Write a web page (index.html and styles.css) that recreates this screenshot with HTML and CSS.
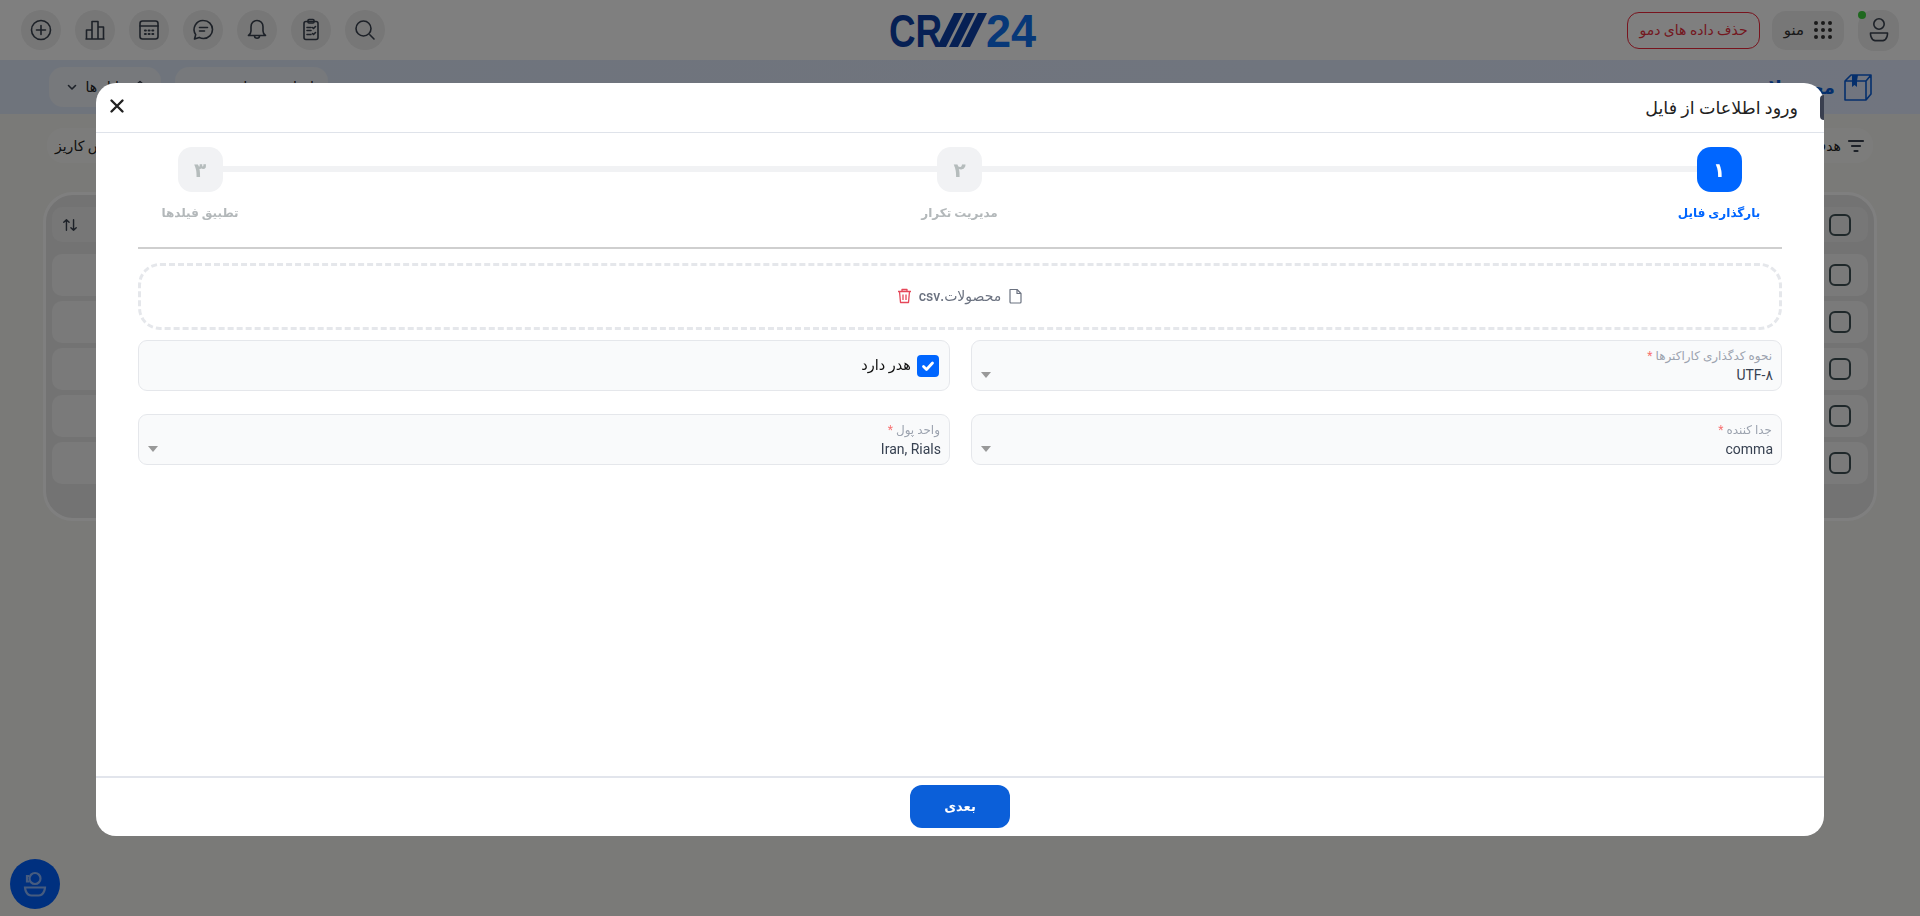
FILE: index.html
```html
<!DOCTYPE html>
<html lang="fa" dir="rtl">
<head>
<meta charset="utf-8">
<title>ورود اطلاعات از فایل</title>
<link rel="stylesheet" href="styles.css">
</head>
<body>
<div class="app">
  <header class="topbar">
    <div class="top-right">
      <div class="avatar">
        <span class="online"></span>
        <svg width="26" height="30" viewBox="0 0 26 30" class="ico"><circle cx="13" cy="9" r="5.2"/><path d="M4.5 18h17c0 0 .3 7-4.5 7.6H9C4.2 25 4.5 18 4.5 18z"/></svg>
      </div>
      <div class="menu">
        <svg width="18" height="18" viewBox="0 0 18 18" class="dots"><circle cx="2" cy="2" r="2"/><circle cx="9" cy="2" r="2"/><circle cx="16" cy="2" r="2"/><circle cx="2" cy="9" r="2"/><circle cx="9" cy="9" r="2"/><circle cx="16" cy="9" r="2"/><circle cx="2" cy="16" r="2"/><circle cx="9" cy="16" r="2"/><circle cx="16" cy="16" r="2"/></svg>
        <span>منو</span>
      </div>
      <div class="demo">حذف داده های دمو</div>
    </div>
    <div class="logo">
      <svg width="160" height="56" viewBox="-6 -11 160 56">
        <text transform="translate(-1 34) scale(.8 1)" class="logo-cr">CR</text>
        <polygon points="64,0 73,0 56,34 47,34" class="logo-m"/>
        <polygon points="76,0 85,0 68,34 59,34" class="logo-m"/>
        <polygon points="88,0 97,0 80,34 71,34" class="logo-m"/>
        <text transform="translate(96 34) scale(.98 1)" class="logo-24">24</text>
      </svg>
    </div>
    <div class="top-left">
      <div class="round"><svg width="24" height="24" viewBox="0 0 24 24" class="ico"><path d="M16.8 16.8L21 21"/><circle cx="10.5" cy="10.5" r="7.5"/></svg></div>
      <div class="round"><svg width="24" height="24" viewBox="0 0 24 24" class="ico"><rect x="5" y="3.5" width="14" height="18" rx="2"/><rect x="9" y="1.5" width="6" height="3.5" rx="1"/><path d="M8 9.5h4M8 12.5h4M8 16.5h4M13.5 9.5l1 1 2-2M13.5 15.5l1 1 2-2"/></svg></div>
      <div class="round"><svg width="24" height="24" viewBox="0 0 24 24" class="ico"><path d="M12 2.5c-3.6 0-6 2.8-6 6.2v4.3c0 2-1 3.4-2.5 4.5h17c-1.5-1.100-2.500-2.500-2.500-4.500V8.700c0-3.400-2.400-6.200-6-6.200z"/><path d="M9.500 18c0 3 5 3 5 0"/></svg></div>
      <div class="round"><svg width="24" height="24" viewBox="0 0 24 24" class="ico"><path d="M12.500 2.500a9 9 0 0 1 0 18c-1.600 0-3-.4-4.300-1.100L3.500 21l1.200-4.400a9 9 0 0 1 7.800-14.100z"/><path d="M8.500 9.500h8M8.500 13h5"/></svg></div>
      <div class="round"><svg width="24" height="24" viewBox="0 0 24 24" class="ico"><rect x="3" y="3" width="18" height="18" rx="2.500"/><path d="M3 8h18"/><path class="thick" d="M8 12.500h.8M11.700 12.500h.8M15.400 12.500h.8M11.700 16h.8M15.400 16h.8M8 16h.8"/></svg></div>
      <div class="round"><svg width="24" height="24" viewBox="0 0 24 24" class="ico"><path d="M3 21h18M3.500 21v-9h5.500v9M9 21V3.500h6V21M15 21V9h5.500v12"/></svg></div>
      <div class="round"><svg width="24" height="24" viewBox="0 0 24 24" class="ico"><circle cx="12" cy="12" r="9.500"/><path d="M12 7.500v9M7.500 12h9"/></svg></div>
    </div>
  </header>

  <section class="subbar">
    <div class="page-title">
      <svg width="30" height="30" viewBox="0 0 30 30" class="box"><path d="M2 9l6-6h20l-5 6zM2 9h21v19H2zM23 9l5-6v19l-5 6"/><path class="mark" d="M9 3h6l-1 6v6l-2.500-2-2.500 2V9z"/></svg>
      <span>محصولات</span>
    </div>
    <div class="sub-actions">
      <div class="pill wide">ایجاد محصول جدید</div>
      <div class="pill narrow">
        <svg width="14" height="14" viewBox="0 0 14 14" class="ico"><path d="M2 6l5-4.500L12 6M3.500 5.500V12h7V5.500"/></svg>
        <span>فایل ها</span>
        <svg width="12" height="12" viewBox="0 0 12 12" class="ico"><path d="M2.500 4.500L6 8l3.500-3.500"/></svg>
      </div>
    </div>
  </section>

  <section class="filters">
    <div class="chip first">
      <svg width="18" height="18" viewBox="0 0 18 18" class="ico"><path class="thick" d="M2 4h14M5 9h8M7.500 14h3"/></svg>
      <span>هدف</span>
    </div>
    <div class="chip last">قیف پیش کاریز</div>
  </section>

  <section class="panel">
    <div class="row head"><span class="check"></span><svg width="16" height="16" viewBox="0 0 18 18" class="ico sort"><path d="M5 15V3M2 6l3-3 3 3M13 3v12M10 12l3 3 3-3"/></svg></div>
    <div class="row"><span class="check"></span></div>
    <div class="row"><span class="check"></span></div>
    <div class="row"><span class="check"></span></div>
    <div class="row"><span class="check"></span></div>
    <div class="row"><span class="check"></span></div>
  </section>

  <div class="bubble">
    <svg width="34" height="34" viewBox="0 0 34 34" class="bubble-ico"><circle cx="17" cy="11.500" r="5.500"/><path d="M11 9h-2v5.500h2.500"/><path d="M7 20.500h20c0 0-.5 8-6.500 8h-7c-6 0-6.500-8-6.500-8z"/></svg>
  </div>
</div>

<div class="overlay">
  <div class="modal">
    <span class="sliver"></span>
    <div class="modal-head">
      <h2>ورود اطلاعات از فایل</h2>
      <svg width="16" height="16" viewBox="0 0 16 16" class="close"><path d="M2.500 2.500l11 11M13.500 2.500l-11 11"/></svg>
    </div>
    <div class="modal-body">
      <div class="steps">
        <div class="step active"><div class="num">۱</div><div class="lbl">بارگذاری فایل</div></div>
        <div class="step"><div class="num">۲</div><div class="lbl">مدیریت تکرار</div></div>
        <div class="step"><div class="num">۳</div><div class="lbl">تطبیق فیلدها</div></div>
      </div>
      <hr class="rule">
      <div class="drop">
        <svg width="15" height="16" viewBox="0 0 15 16" class="file"><path d="M2 1.500h7l4 4V14a1 1 0 0 1-1 1H3a1 1 0 0 1-1-1z"/><path d="M9 1.500v4h4"/></svg>
        <span>محصولات.csv</span>
        <svg width="15" height="16" viewBox="0 0 15 16" class="trash"><path d="M1 3.500h13M5 3.500V1.500h5v2M2.500 3.500l1 11h8l1-11M6 6.500v5.500M9 6.500v5.500"/></svg>
      </div>
      <div class="fields">
        <div class="field">
          <div class="f-text"><div class="f-label">نحوه کدگذاری کاراکترها <i>*</i></div><div class="f-value">UTF-۸</div></div>
          <span class="caret"></span>
        </div>
        <div class="field flag">
          <span class="tick"><svg width="14" height="14" viewBox="0 0 14 14"><path d="M2.500 7.500l3 3 6-6.500"/></svg></span>
          <span>هدر دارد</span>
        </div>
        <div class="field">
          <div class="f-text"><div class="f-label">جدا کننده <i>*</i></div><div class="f-value">comma</div></div>
          <span class="caret"></span>
        </div>
        <div class="field">
          <div class="f-text"><div class="f-label">واحد پول <i>*</i></div><div class="f-value">Iran, Rials</div></div>
          <span class="caret"></span>
        </div>
      </div>
    </div>
    <div class="modal-foot"><div class="next">بعدی</div></div>
  </div>
</div>
</body>
</html>
```
FILE: styles.css
```css
*{box-sizing:border-box}
html,body{height:100%}
body{margin:0;overflow:hidden;background:#f4f4f0;color:#222;font-family:Roboto,"DejaVu Sans",sans-serif;font-size:13px}
.app{height:916px;display:flex;flex-direction:column;position:relative}

.topbar{height:60px;background:#fff;display:grid;grid-template-columns:1fr auto 1fr;align-items:center;padding:0 21px}
.top-right,.top-left{display:flex;align-items:center}
.top-left{justify-content:flex-end;gap:14px}
.top-right{gap:14px}
.avatar{width:41px;height:41px;border-radius:16px;background:#eee;display:flex;align-items:center;justify-content:center;position:relative}
.online{position:absolute;top:1px;left:0;width:8px;height:8px;border-radius:50%;background:#3fd13f}
.menu{width:72px;height:39px;border-radius:14px;background:#eee;display:flex;align-items:center;justify-content:center;gap:10px;color:#333;font-size:15px}
.dots{fill:#333}
.demo{width:133px;height:37px;border:1px solid #f0283c;border-radius:12px;background:#fff;color:#e8303f;display:flex;align-items:center;justify-content:center;font-size:14px;margin-right:-2px}
.round{width:40px;height:40px;border-radius:50%;background:#eee;display:flex;align-items:center;justify-content:center}
.ico{fill:none;stroke:#3a4350;stroke-width:1.6;stroke-linecap:round;stroke-linejoin:round}
.ico .thick{stroke-width:2.200}
.logo{margin-right:-7px;display:flex}
.logo svg{margin:-8px -5px}
.logo-cr{font:700 46px "Liberation Sans",sans-serif;fill:#0c40a8;direction:ltr}
.logo-m{fill:#0c40a8}
.logo-24{font:700 46px "Liberation Sans",sans-serif;fill:#0e70f0;direction:ltr}

.subbar{height:54px;background:linear-gradient(to left,#e2ebff,#dee8f8);display:flex;align-items:center;justify-content:space-between;padding:0 47px 0 49px}
.page-title{display:flex;align-items:center;gap:8px;color:#0b5fd9;font-size:18px;font-weight:700}
.box{fill:none;stroke:#0b5fd9;stroke-width:1.600;stroke-linejoin:round}
.box .mark{fill:#0b5fd9;stroke:none}
.sub-actions{display:flex;gap:14px;align-items:center}
.pill{height:40px;border-radius:14px;background:#eef2f9;display:flex;align-items:center;gap:7px;font-size:14px;padding:0 14px}
.wide{width:153px}
.narrow{width:112px}

.filters{height:35px;margin:14px 47px 0;display:flex;justify-content:space-between}
.chip{height:35px;border-radius:16px;background:#f9f9f6;display:flex;align-items:center;gap:6px;padding:0 8px;font-size:14px}

.panel{height:329px;margin:29px 43px 0;border:3px solid #fff;border-radius:30px;background:#e6e6e6;padding:12px 6px;display:flex;flex-direction:column;gap:5px}
.row{height:42px;flex:none;border-radius:10px;background:#f4f4f4;display:flex;align-items:center;justify-content:space-between;padding:0 17px 0 10px}
.row.head{height:35px;margin-bottom:7px;background:#eee}
.check{width:22px;height:22px;border:2px solid #3f5055;border-radius:6px}
.sort{margin-left:0}

.bubble{position:absolute;left:10px;bottom:7px;width:50px;height:50px;border-radius:50%;background:#0060ff;display:flex;align-items:center;justify-content:center}
.bubble-ico{fill:none;stroke:#fff;stroke-width:2.200;opacity:.55}

.overlay{position:fixed;inset:0;background:rgba(0,0,0,.5);padding:83px 96px 0}
.modal{position:relative;width:1728px;height:753px;background:#fff;border-radius:20px;display:flex;flex-direction:column}
.sliver{position:absolute;right:0;top:12px;width:4px;height:25px;background:#3a3f4f;border-radius:6px 0 0 6px}
.modal-head{height:50px;flex:none;border-bottom:1px solid #dfe3ea;display:flex;align-items:center;justify-content:space-between;padding:0 26px 0 12px}
.modal-head h2{margin:0;font-size:17.500px;font-weight:400;color:#222}
.close{fill:none;stroke:#222;stroke-width:2.400;stroke-linecap:round;margin:0 0 3px 1px}
.modal-body{flex:1;padding:14px 42px 0}

.steps{display:flex;justify-content:space-between;padding:0 3px 0 2px;background:linear-gradient(#f1f2f4,#f1f2f4) no-repeat center 19px/calc(100% - 124px) 6px}
.step{width:120px;display:flex;flex-direction:column;align-items:center;gap:10px}
.num{width:45px;height:45px;border-radius:14px;background:#f1f2f4;color:#b5bcbc;font-size:20px;font-weight:700;display:flex;align-items:center;justify-content:center}
.lbl{font-size:12px;color:#b3b8ba;line-height:22px;font-weight:700;white-space:nowrap}
.active .num{background:#0066ff;color:#fff}
.active .lbl{color:#0066ff}

.rule{margin:23px 0 14px;border:0;border-top:2px solid #cfcfcf}
.drop{height:67px;border:3px dashed #e5e7eb;border-radius:22px;display:flex;align-items:center;justify-content:center;gap:7px;color:#6b7280;font-size:14px;font-weight:500;padding-bottom:2px}
.file{fill:none;stroke:#6b7280;stroke-width:1.200;stroke-linejoin:round}
.trash{fill:none;stroke:#e5485a;stroke-width:1.300;stroke-linejoin:round}

.fields{margin-top:10px;display:grid;grid-template-columns:811px 812px;grid-auto-rows:51px;column-gap:21px;row-gap:23px}
.field{background:#f9fafb;border:1px solid #e5e7eb;border-radius:9px;display:flex;align-items:flex-end;justify-content:space-between;padding:0 9px 6px 9px}
.f-text{display:flex;flex-direction:column;gap:3px}
.f-label{font-size:12px;color:#9ca3af;line-height:14px}
.f-label i{color:#f87171;font-style:normal}
.f-value{font-size:14px;color:#374151;line-height:18px;margin-right:-1px}
.caret{width:0;height:0;border:5px solid transparent;border-top:6px solid #999;border-bottom:0;margin-bottom:6px}
.flag{align-items:center;justify-content:flex-start;gap:6px;padding:0 10px;color:#111;font-size:14.500px}
.tick{width:22px;height:22px;border-radius:4px;background:#0066ff;display:flex;align-items:center;justify-content:center}
.tick svg{fill:none;stroke:#fff;stroke-width:2.800;stroke-linecap:round;stroke-linejoin:round}

.modal-foot{height:60px;flex:none;border-top:2px solid #e2e5ec;display:flex;justify-content:center;padding-top:7px}
.next{width:100px;height:43px;border-radius:12px;background:#0b5fd9;color:#fff;font-size:13px;font-weight:700;display:flex;align-items:center;justify-content:center}
```
